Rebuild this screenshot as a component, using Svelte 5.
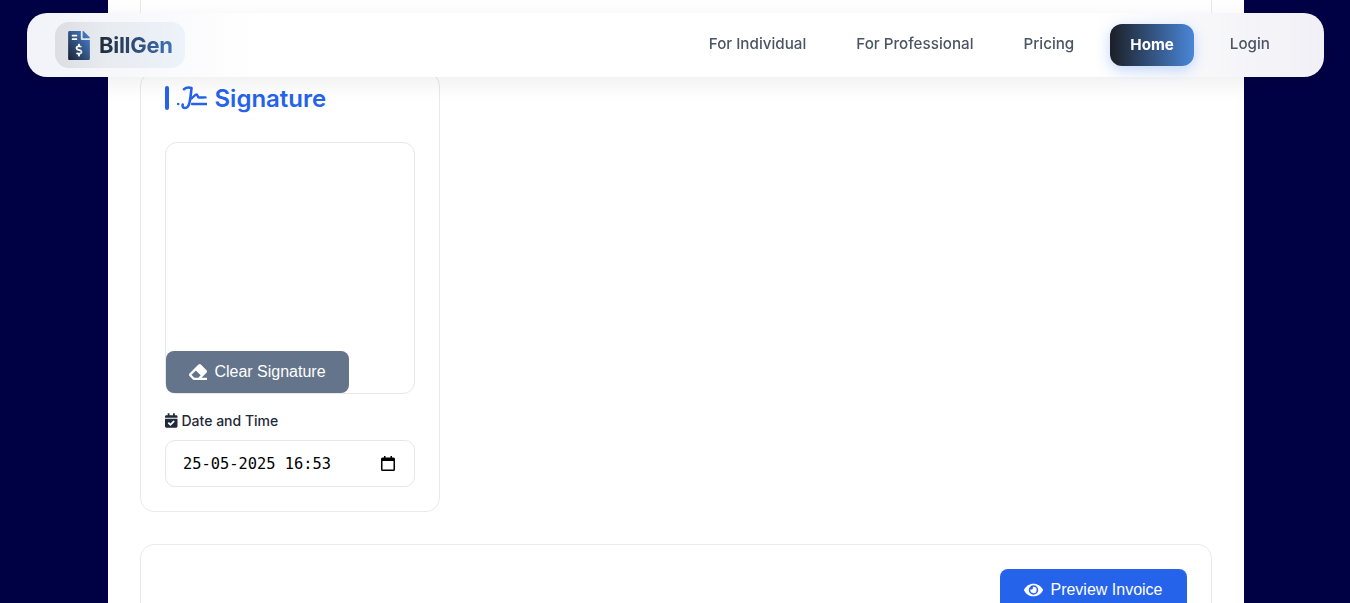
<script>
  const links = ['For Individual', 'For Professional', 'Pricing'];
</script>

<div class="page">
  <header class="nav">
    <a class="logo" href="#top">
      <svg class="logo-icon" viewBox="0 0 384 512" aria-hidden="true">
        <defs>
          <linearGradient id="lg" x1="0" y1="1" x2="1" y2="0">
            <stop offset="0" stop-color="#1b2330" />
            <stop offset="1" stop-color="#4a86d8" />
          </linearGradient>
        </defs>
        <rect x="40" y="40" width="170" height="430" fill="#fff" />
        <path fill="url(#lg)" d="M377 105L279.1 7c-4.5-4.5-10.6-7-17-7H256v128h128v-6.1c0-6.3-2.5-12.4-7-16.9zm-153 31V0H24C10.7 0 0 10.7 0 24v464c0 13.3 10.7 24 24 24h336c13.3 0 24-10.7 24-24V160H248c-13.2 0-24-10.8-24-24zM64 72c0-4.42 3.58-8 8-8h80c4.42 0 8 3.58 8 8v16c0 4.42-3.58 8-8 8H72c-4.42 0-8-3.58-8-8V72zm0 80v-16c0-4.42 3.58-8 8-8h80c4.42 0 8 3.58 8 8v16c0 4.42-3.58 8-8 8H72c-4.42 0-8-3.58-8-8zm144 263.88V440c0 4.42-3.58 8-8 8h-16c-4.42 0-8-3.58-8-8v-24.29c-11.29-.58-22.27-4.52-31.37-11.35-3.9-2.93-4.1-8.77-.57-12.14l11.75-11.21c2.77-2.64 6.89-2.76 10.13-.73 3.87 2.42 8.26 3.72 12.82 3.72h28.11c6.5 0 11.8-5.92 11.8-13.19 0-5.95-3.61-11.19-8.77-12.73l-45-13.5c-18.59-5.58-31.58-23.42-31.58-43.39 0-24.52 19.05-44.44 42.67-45.07V232c0-4.42 3.58-8 8-8h16c4.42 0 8 3.58 8 8v24.29c11.29.58 22.27 4.51 31.37 11.35 3.9 2.93 4.1 8.77.57 12.14l-11.75 11.21c-2.77 2.64-6.89 2.76-10.13.73-3.87-2.43-8.26-3.72-12.82-3.72h-28.11c-6.5 0-11.8 5.92-11.8 13.19 0 5.95 3.61 11.19 8.77 12.73l45 13.5c18.59 5.58 31.58 23.42 31.58 43.39 0 24.53-19.05 44.44-42.67 45.07z" />
      </svg>
      <span class="logo-text">BillGen</span>
    </a>
    <nav class="links">
      {#each links as l}
        <a class="link" href="#top">{l}</a>
      {/each}
      <a class="link home" href="#top">Home</a>
      <a class="link" href="#top">Login</a>
    </nav>
  </header>

  <main class="sheet">
    <div class="card top-card"></div>

    <section class="card sig-card">
      <h2 class="title">
        <span class="bar"></span>
        <svg class="sig-icon" viewBox="0 0 30 24" aria-hidden="true">
          <circle cx="1.2" cy="18" r="1.300" fill="currentColor" />
          <path d="M7 3.200C9 1.500 12 1.300 14.500 2c-.5 5-1 10.500-2 14.500-.8 3.500-2.500 5.500-4.500 5.500s-2.800-1.500-2.300-3.500" fill="none" stroke="currentColor" stroke-width="2.600" stroke-linecap="round" stroke-linejoin="round" />
          <path d="M14.500 12.500c2-1.800 3.800-4 5-4 1.400 0 .8 2.700 2.300 3 1.500.2 4-.1 6.700-.1" fill="none" stroke="currentColor" stroke-width="2.400" stroke-linecap="round" stroke-linejoin="round" />
          <path d="M15 18h14.500" fill="none" stroke="currentColor" stroke-width="2.400" stroke-linecap="round" />
        </svg>
        <span>Signature</span>
      </h2>

      <div class="pad">
        <button class="btn clear" type="button">
          <svg class="btn-icon" viewBox="0 0 512 512" aria-hidden="true">
            <path fill="currentColor" d="M497.941 273.941c18.745-18.745 18.745-49.137 0-67.882l-160-160c-18.745-18.745-49.136-18.746-67.883 0l-256 256c-18.745 18.745-18.745 49.137 0 67.882l96 96A48.004 48.004 0 0 0 144 480h356c6.627 0 12-5.373 12-12v-40c0-6.627-5.373-12-12-12H355.883l142.058-142.059zm-302.627-62.627l137.373 137.373L265.373 416H150.628l-80-80 124.686-124.686z" />
          </svg>
          Clear Signature
        </button>
      </div>

      <label class="label" for="dt">
        <svg class="cal" viewBox="0 0 448 512" aria-hidden="true">
          <path fill="currentColor" d="M436 160H12c-6.627 0-12-5.373-12-12v-36c0-26.51 21.49-48 48-48h48V12c0-6.627 5.373-12 12-12h40c6.627 0 12 5.373 12 12v52h128V12c0-6.627 5.373-12 12-12h40c6.627 0 12 5.373 12 12v52h48c26.51 0 48 21.49 48 48v36c0 6.627-5.373 12-12 12zM12 192h424c6.627 0 12 5.373 12 12v260c0 26.51-21.49 48-48 48H48c-26.51 0-48-21.49-48-48V204c0-6.627 5.373-12 12-12zm333.296 95.947l-28.169-28.398c-4.667-4.705-12.265-4.736-16.970-.068L194.120 364.665l-45.980-46.352c-4.667-4.705-12.266-4.736-16.971-.068l-28.397 28.170c-4.705 4.667-4.736 12.265-.068 16.970l82.601 83.269c4.667 4.705 12.265 4.736 16.970.068l142.953-141.805c4.705-4.667 4.736-12.265.068-16.970z" />
        </svg>
        Date and Time
      </label>
      <div class="dt" id="dt">
        <span>25-05-2025 16:53</span>
        <svg class="dt-icon" viewBox="0 0 14 15" aria-hidden="true">
          <path fill="#000" d="M3 0h1.500v1.500h5V0H11v1.500h1.500A1.500 1.500 0 0 1 14 3v10.500a1.500 1.500 0 0 1-1.500 1.500h-11A1.500 1.500 0 0 1 0 13.500V3a1.500 1.500 0 0 1 1.500-1.500H3V0zM1.500 5v8.500h11V5h-11z" />
        </svg>
      </div>
    </section>

    <section class="card actions">
      <button class="btn preview" type="button">
        <svg class="btn-icon eye" viewBox="0 0 576 512" aria-hidden="true">
          <path fill="currentColor" d="M572.52 241.4C518.29 135.59 410.93 64 288 64S57.68 135.64 3.48 241.41a32.35 32.35 0 0 0 0 29.19C57.71 376.41 165.07 448 288 448s230.32-71.64 284.52-177.41a32.35 32.35 0 0 0 0-29.19zM288 400a144 144 0 1 1 144-144 143.93 143.93 0 0 1-144 144zm0-240a95.31 95.31 0 0 0-25.31 3.79 47.85 47.85 0 0 1-66.9 66.9A95.78 95.78 0 1 0 288 160z" />
        </svg>
        Preview Invoice
      </button>
    </section>
  </main>
</div>

<style>
  :global(body) {
    margin: 0;
    background: #000045;
    font-family: Inter, "Liberation Sans", sans-serif;
  }
  .page {
    height: 603px;
    overflow: hidden;
  }
  .nav {
    position: fixed;
    top: 13px;
    left: 27px;
    width: 1297px;
    height: 64px;
    box-sizing: border-box;
    padding: 0 54px 0 28px;
    display: flex;
    align-items: center;
    justify-content: space-between;
    border-radius: 20px;
    background: linear-gradient(90deg, #f2f3f8 0%, #fff 18%, #fff 82%, #f0f0f6 100%);
    box-shadow: 0 6px 24px rgba(0, 0, 0, 0.07);
  }
  .logo {
    display: flex;
    align-items: center;
    gap: 9px;
    width: 130px;
    height: 46px;
    box-sizing: border-box;
    padding-left: 13px;
    border-radius: 14px;
    background: linear-gradient(90deg, #dcdee3 0%, #e8ebf0 40%, #edf3fa 100%);
    text-decoration: none;
  }
  .logo-icon {
    width: 22px;
    height: 29px;
  }
  .logo-text {
    font-size: 22px;
    font-weight: 700;
    letter-spacing: -0.3px;
    background: linear-gradient(90deg, #1f2937, #3f72b8);
    -webkit-background-clip: text;
    background-clip: text;
    color: transparent;
  }
  .links {
    display: flex;
    align-items: center;
    gap: 50px;
  }
  .link {
    font-size: 15.2px;
    font-weight: 500;
    line-height: 20px;
    padding-bottom: 2px;
    color: #4b5563;
    text-decoration: none;
  }
  .home {
    height: 42px;
    box-sizing: border-box;
    line-height: 42px;
    padding: 0 20px;
    margin-left: -14px;
    margin-right: -14px;
    border-radius: 12px;
    color: #fff;
    font-weight: 700;
    background: linear-gradient(90deg, #1c1f26, #4a86d8);
    box-shadow: 0 4px 14px rgba(59, 130, 246, 0.3);
  }
  .sheet {
    width: 1136px;
    margin-left: 108px;
    box-sizing: border-box;
    padding: 0 32px;
    background: #fff;
    height: 603px;
    display: flex;
    flex-direction: column;
    gap: 32px;
  }
  .card {
    background: #fff;
    border: 1px solid #e8e9ec;
    border-radius: 14px;
    box-sizing: border-box;
  }
  .top-card {
    height: 40px;
    flex: none;
    border-top: 0;
    border-radius: 0 0 14px 14px;
  }
  .sig-card {
    width: 300px;
    height: 440px;
    flex: none;
    padding: 11px 24px 24px;
    display: flex;
    flex-direction: column;
  }
  .title {
    margin: 0;
    height: 28px;
    display: flex;
    align-items: center;
    font-size: 24px;
    font-weight: 600;
    color: #2563eb;
  }
  .bar {
    width: 4px;
    height: 24px;
    border-radius: 2px;
    background: #2563eb;
    margin-right: 8px;
  }
  .sig-icon {
    width: 30px;
    height: 24px;
    margin-right: 8px;
  }
  .title span:last-child {
    margin-left: -0.5px;
  }
  .pad {
    margin-top: 30px;
    height: 253px;
    box-sizing: border-box;
    border: 1px solid #e5e7eb;
    border-radius: 12px;
    display: flex;
    align-items: flex-end;
  }
  .btn {
    border: 0;
    color: #fff;
    font: 16px "Liberation Sans", Arial, sans-serif;
    display: flex;
    align-items: center;
    gap: 7px;
    border-radius: 8px;
    padding: 0;
    justify-content: center;
  }
  .clear {
    width: 183px;
    height: 42px;
    background: #64748b;
  }
  .btn-icon {
    width: 18px;
    height: 18px;
  }
  .eye {
    width: 19px;
  }
  .label {
    margin-top: 18px;
    margin-bottom: 1px;
    display: flex;
    align-items: center;
    gap: 4px;
    font-size: 14px;
    font-weight: 500;
    line-height: 17px;
    color: #1e293b;
  }
  .cal {
    width: 12.500px;
    height: 15px;
  }
  .dt {
    margin-top: 10px;
    height: 47px;
    box-sizing: border-box;
    border: 1px solid #e5e7eb;
    border-radius: 10px;
    padding: 0 19px 0 17px;
    display: flex;
    align-items: center;
    justify-content: space-between;
    font: 15.36px "DejaVu Sans Mono", monospace;
    color: #000;
  }
  .dt-icon {
    width: 14px;
    height: 15px;
  }
  .actions {
    height: 100px;
    flex: none;
    padding: 24px;
    display: flex;
    justify-content: flex-end;
    align-items: flex-start;
  }
  .preview {
    width: 187px;
    height: 42px;
    background: #2563eb;
  }
</style>
